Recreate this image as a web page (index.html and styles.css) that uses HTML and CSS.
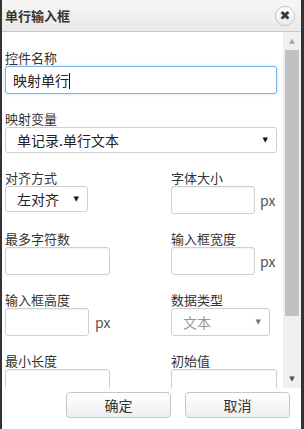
FILE: index.html
```html
<!DOCTYPE html>
<html lang="zh-CN">
<head>
  <meta charset="UTF-8">
  <meta name="viewport" content="width=device-width, initial-scale=1.0">
  <title>单行输入框</title>
  <link rel="stylesheet" href="styles.css">
</head>
<body>

  <div class="dialog">
    <!-- Header -->
    <div class="dialog-header">
      <span class="dialog-title">单行输入框</span>
      <span class="close-btn">✖</span>
    </div>

    <!-- Body -->
    <div class="dialog-body">
      <div class="form">
        <div class="field">
          <label>控件名称</label>
          <div class="input focused w-full">映射单行<span class="caret"></span></div>
        </div>

        <div class="field">
          <label>映射变量</label>
          <div class="select w-full"><span>单记录.单行文本</span><span class="arrow">▼</span></div>
        </div>

        <div class="row">
          <div class="field">
            <label>对齐方式</label>
            <div class="select w-align"><span>左对齐</span><span class="arrow">▼</span></div>
          </div>
          <div class="field">
            <label>字体大小</label>
            <div class="with-unit">
              <input type="text" class="input w-px">
              <span class="unit">px</span>
            </div>
          </div>
        </div>

        <div class="row">
          <div class="field">
            <label>最多字符数</label>
            <input type="text" class="input w-half">
          </div>
          <div class="field">
            <label>输入框宽度</label>
            <div class="with-unit">
              <input type="text" class="input w-px">
              <span class="unit">px</span>
            </div>
          </div>
        </div>

        <div class="row">
          <div class="field">
            <label>输入框高度</label>
            <div class="with-unit">
              <input type="text" class="input w-px">
              <span class="unit unit-wide">px</span>
            </div>
          </div>
          <div class="field">
            <label>数据类型</label>
            <div class="select w-type disabled"><span>文本</span><span class="arrow">▼</span></div>
          </div>
        </div>

        <div class="row">
          <div class="field">
            <label>最小长度</label>
            <input type="text" class="input w-half">
          </div>
          <div class="field">
            <label>初始值</label>
            <input type="text" class="input w-init">
          </div>
        </div>
      </div>

      <!-- Scrollbar -->
      <div class="scrollbar">
        <span class="scroll-arrow up">▲</span>
        <div class="scroll-track">
          <div class="scroll-thumb"></div>
        </div>
        <span class="scroll-arrow down">▼</span>
      </div>
    </div>

    <!-- Footer -->
    <div class="dialog-footer">
      <button class="btn">确定</button>
      <button class="btn">取消</button>
    </div>
  </div>

</body>
</html>
```

FILE: styles.css
```css
/* Global Styles */
body {
  margin: 0;
  padding: 0;
  font-family: 'Noto Sans CJK SC', 'Noto Sans', sans-serif;
  color: #333;
  background: #fff;
}

.dialog {
  width: 304px;
  height: 429px;
  box-sizing: border-box;
  border-left: 2px solid #333;
  border-right: 3px solid #333;
  display: flex;
  flex-direction: column;
  overflow: hidden;
}

/* Header */
.dialog-header {
  height: 32px;
  box-sizing: border-box;
  flex-shrink: 0;
  display: flex;
  align-items: center;
  justify-content: space-between;
  padding: 0 6px 0 3px;
  background: linear-gradient(#f6f6f6, #e9e9e9);
  border-bottom: 1px solid #c8c8c8;
}

.dialog-title {
  font-size: 13px;
  font-weight: bold;
  line-height: 16px;
}

.close-btn {
  width: 20px;
  height: 20px;
  box-sizing: border-box;
  border: 1px solid #c4c4c4;
  border-radius: 50%;
  background: linear-gradient(#ffffff, #ececec);
  color: #3a3a3a;
  font-family: 'DejaVu Sans', sans-serif;
  font-size: 13px;
  font-weight: bold;
  line-height: 18px;
  text-align: center;
  margin-top: 1px;
}

/* Body */
.dialog-body {
  flex: 1;
  display: flex;
  overflow: hidden;
}

.form {
  flex: 1;
  padding: 18px 0 0 3px;
  display: flex;
  flex-direction: column;
  gap: 17px;
  overflow: hidden;
}

.row {
  display: grid;
  grid-template-columns: 166px 1fr;
}

.field label {
  display: block;
  font-size: 13px;
  line-height: 16px;
  color: #333;
}

/* Inputs */
.input {
  display: block;
  height: 28px;
  box-sizing: border-box;
  margin: 0;
  padding: 0 7px;
  border: 1px solid #cfcfcf;
  border-radius: 3px;
  box-shadow: inset 0 1px 1px rgba(0, 0, 0, 0.05);
  background: #fff;
  font-family: inherit;
  font-size: 14px;
  line-height: 26px;
  color: #222;
}

.input.focused {
  border-color: #7fb4e2;
  box-shadow: 0 0 3px rgba(102, 175, 233, 0.5);
}

.caret {
  display: inline-block;
  width: 1px;
  height: 16px;
  background: #111;
  vertical-align: -3px;
}

.with-unit {
  display: flex;
  align-items: center;
}

.unit {
  font-size: 14px;
  color: #555;
  margin-left: 5px;
}

.unit-wide {
  margin-left: 6px;
}

/* Selects */
.select {
  height: 26px;
  box-sizing: border-box;
  display: flex;
  align-items: center;
  justify-content: space-between;
  padding: 0 8px 0 11px;
  border: 1px solid #cfcfcf;
  border-radius: 3px;
  background: #fff;
  font-size: 14px;
  color: #222;
}

.select .arrow {
  font-family: 'DejaVu Sans', sans-serif;
  font-size: 7px;
  color: #111;
}

.select.disabled {
  height: 28px;
  padding-left: 11px;
  color: #999;
}

.select.disabled .arrow {
  color: #777;
}

/* Widths */
.w-full { width: 272px; }
.w-align { width: 83px; }
.w-px { width: 84px; }
.w-half { width: 105px; }
.w-type { width: 99px; }
.w-init { width: 106px; }

/* Scrollbar */
.scrollbar {
  width: 18px;
  flex-shrink: 0;
  display: flex;
  flex-direction: column;
  background: #f0f0f0;
}

.scroll-arrow {
  height: 18px;
  font-family: 'DejaVu Sans', sans-serif;
  font-size: 7px;
  line-height: 18px;
  text-align: center;
}

.scroll-arrow.up {
  color: #a3a3a3;
}

.scroll-arrow.down {
  color: #505050;
}

.scroll-track {
  flex: 1;
}

.scroll-thumb {
  width: 14px;
  height: 266px;
  margin: 0 auto;
  background: #c1c1c1;
}

/* Footer */
.dialog-footer {
  height: 41px;
  box-sizing: border-box;
  flex-shrink: 0;
  display: flex;
  justify-content: flex-end;
  gap: 14px;
  padding: 4px 11px 0 0;
  background: #fff;
}

.btn {
  width: 105px;
  height: 26px;
  border: 1px solid #c6c6c6;
  border-radius: 4px;
  background: linear-gradient(#ffffff, #efefef);
  font-family: inherit;
  font-size: 14px;
  color: #333;
  cursor: pointer;
}
```
